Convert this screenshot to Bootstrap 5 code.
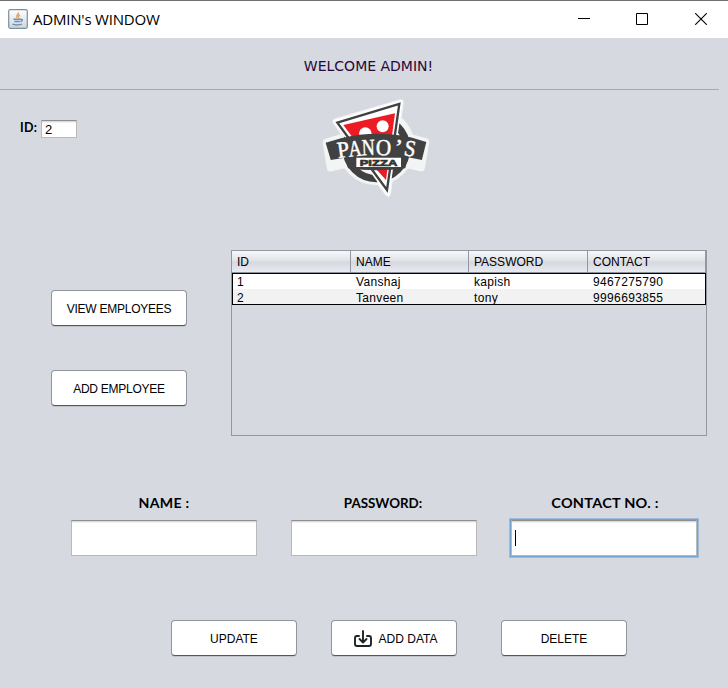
<!DOCTYPE html>
<html lang="en">
<head>
<meta charset="utf-8">
<meta name="viewport" content="width=device-width, initial-scale=1">
<title>ADMIN's WINDOW</title>
<link href="https://cdn.jsdelivr.net/npm/bootstrap@5.3.0/dist/css/bootstrap.min.css" rel="stylesheet">
<style>
body{background:#d6d9e0;font:12px/16px "Liberation Sans",Arial,sans-serif;color:#000;width:728px;height:688px;overflow:hidden}
.titlebar{height:38px;border-top:1px solid #6f6f70;padding:0 0 1px 8px;background:#fff}
.title-text{font:15px/20px "Open Sans","Noto Sans",sans-serif;letter-spacing:-.2px;margin-left:5px}
.controls{gap:46px;padding-right:21px}
.controls svg:last-child{margin-left:1px}
.welcome{height:52px;width:719px;border-bottom:1px solid #a5a8b4;font:14px/18px "DejaVu Sans",Verdana,sans-serif;color:#2a0638;padding:19px 0 0 18px}
.top-row{height:160px;padding-left:20px}
.fancy{font:700 12.5px/16px Lato,sans-serif;white-space:nowrap}
.id-label{margin-top:30px;width:21px;letter-spacing:.3px}
.sp-name{letter-spacing:.25px;transform:scaleX(1.13)}
.sp-pass{transform:translateX(-1px) scaleX(1.07)}
.sp-contact{letter-spacing:.2px;transform:translateX(1px) scaleX(1.16)}
.field{background:#fff;border:1px solid #b9b9b9;border-top-color:#8e8e8e;border-radius:0;box-shadow:inset 0 1px #d9d9d9,inset 0 2px #f2f2f2;padding:0 3px;font-size:13px;color:#000;line-height:16px}
.id-field{width:36px;height:18px;margin-top:30px}
.logo{margin:0 0 0 233px;width:130px;height:115px}
.middle{height:186px;padding-left:51px;gap:44px}
.side{padding-top:40px;gap:44px}
.swing{height:36px;width:126px;padding:2px 0 0;background:#fff;border:1px solid #92959d;border-bottom-color:#53565e;border-radius:4px;font-size:12px;line-height:16px;color:#000;box-shadow:0 1px #c0c3ca;white-space:nowrap}
.swing-wide{width:136px;letter-spacing:-.25px}
.swing-icon{gap:6px;padding-left:2px}
.swing-last{margin-left:10px}
.grid-box{width:476px;height:186px;border:1px solid #9297a1}
.grid-box table{table-layout:fixed;width:474px;line-height:16px;border-collapse:separate;border-spacing:0}
.grid-box th{height:22px;font-weight:400;padding:0 0 0 5px;border-right:1px solid #9297a1;border-bottom:1px solid #8c919b;background:linear-gradient(#f8f8fa,#e4e6eb 40%,#d6d9e0 55%,#e7eaf0)}
.rows{outline:1px solid #000;outline-offset:-1px;letter-spacing:.32px}
.rows td{height:16px;padding:2px 0 0 5px;line-height:14px;vertical-align:bottom}
.rows td:last-child{letter-spacing:.36px}
.rows tr{background:#fff}
.rows tr:last-child{background:#f2f2f2}
.form-row{padding:59px 0 0 71px;gap:34px}
.form-row .field{width:186px;height:36px;margin-top:9px}
.form-row .fancy{height:16px;padding-top:1px}
.form-row .field.active{outline:1px solid #73a4d1;padding:9px 3px;box-shadow:inset 0 1px #d9d9d9,inset 0 2px #f2f2f2,0 0 0 2px #9dbbdc}
.caret{width:1px;height:16px;background:#000}
.actions{padding:64px 0 0 171px;gap:34px}
</style>
<script src="https://cdn.jsdelivr.net/npm/bootstrap@5.3.0/dist/js/bootstrap.bundle.min.js"></script>
</head>
<body>
<header class="titlebar d-flex align-items-center">
  <svg width="20" height="20" viewBox="0 0 20 20">
    <defs><linearGradient id="tile" x2="0" y2="1"><stop stop-color="#fff"/><stop offset="1" stop-color="#cdd5dd"/></linearGradient></defs>
    <rect x=".7" y=".7" width="18.6" height="18.6" rx="1.5" fill="url(#tile)" stroke="#7890a2" stroke-width="1.2"/>
    <path d="M10.300 3.500c1 2-3 2.800-1.300 5.200M11.800 5.800c-2 1-.8 1.800-1.500 3" fill="none" stroke="#ee9a4d" stroke-width="1.500"/>
    <path d="M5.500 10.300h7.500M6.300 12.500h5.500M4.500 15.200c2 1 7.500 1 9.500-.2M13 10.500c2-.5 1.800 1.600-.6 2" fill="none" stroke="#6f90ab" stroke-width="1.400"/>
  </svg>
  <span class="title-text">ADMIN's WINDOW</span>
  <div class="controls d-flex align-items-center ms-auto">
    <svg width="12" height="12" viewBox="0 0 12 12"><path d="M0 5.500h12" stroke="#000"/></svg>
    <svg width="12" height="12" viewBox="0 0 12 12"><path d="M.5.5h11v11H.5z" fill="none" stroke="#000"/></svg>
    <svg width="12" height="12" viewBox="0 0 12 12"><path d="M.2.2l11.600 11.600m0-11.600L.2 11.800" stroke="#000" stroke-width="1.100"/></svg>
  </div>
</header>
<main>
  <div class="welcome text-center">WELCOME ADMIN!</div>
  <section class="top-row d-flex align-items-start">
    <label class="fancy id-label" for="empId">ID:</label>
    <input id="empId" class="field id-field" value="2">
    <svg class="logo" viewBox="0 0 390 345" role="img" aria-label="Pano's Pizza">
      <g fill="#f3f5f5" stroke="#f3f5f5" stroke-linejoin="round">
        <circle cx="199" cy="170" r="115"/>
        <path d="M78 95L271 38 233 308z" stroke-width="20"/>
        <path d="M50 158L95 144Q200 120 302 144L346 156 333 232 290 222Q199 245 106 222L62 232z" stroke-width="24"/>
      </g>
      <circle cx="199" cy="175" r="91" fill="none" stroke="#414142" stroke-width="22"/>
      <path d="M78 95L271 38 233 308z" fill="#fff" stroke="#fff" stroke-width="12"/>
      <path d="M82 98L268 42 231 300z" fill="#fff" stroke="#414142" stroke-width="7"/>
      <path d="M100 105L255 70 228 270 196 235z" fill="#ed1c24"/>
      <circle cx="218" cy="109" r="18" fill="#fff"/><circle cx="166" cy="131" r="19" fill="#fff"/>
      <path d="M50 158L95 145Q200 120 302 143L346 156 333 209 293 201 284 233Q200 245 116 233L106 202 65 209z" transform="translate(-4 -3) scale(1.02)" fill="#414142"/>
      <path d="M139 203h134v28H139z" fill="#fff"/>
      <g font-family="Liberation Serif,serif" font-size="69" fill="#fff" stroke="#fff" stroke-width="1.5">
        <text transform="translate(85 204) rotate(-8)" textLength="36" lengthAdjust="spacingAndGlyphs">P</text>
        <text transform="translate(117 200) rotate(-5)" textLength="40" lengthAdjust="spacingAndGlyphs">A</text>
        <text transform="translate(156 196) rotate(-2)" textLength="39" lengthAdjust="spacingAndGlyphs">N</text>
        <text transform="translate(197 195) rotate(1)" textLength="46" lengthAdjust="spacingAndGlyphs">O</text>
        <text transform="translate(252 194) rotate(5)" textLength="24" lengthAdjust="spacingAndGlyphs">’</text>
        <text transform="translate(280 195) rotate(10)" textLength="34" lengthAdjust="spacingAndGlyphs">S</text>
      </g>
      <text x="149" y="227" font-family="Liberation Sans,Arial,sans-serif" font-weight="700" font-size="29" fill="#333" stroke="#333" stroke-width="2" textLength="113" lengthAdjust="spacingAndGlyphs">PIZZA</text>
    </svg>
  </section>
  <section class="middle d-flex">
    <div class="side d-flex flex-column">
      <button class="btn swing swing-wide">VIEW EMPLOYEES</button>
      <button class="btn swing swing-wide">ADD EMPLOYEE</button>
    </div>
    <div class="grid-box">
      <table>
        <colgroup><col width="119"><col width="118"><col width="119"><col width="118"></colgroup>
        <thead><tr><th>ID</th><th>NAME</th><th>PASSWORD</th><th>CONTACT</th></tr></thead>
        <tbody class="rows">
          <tr><td>1</td><td>Vanshaj</td><td>kapish</td><td>9467275790</td></tr>
          <tr><td>2</td><td>Tanveen</td><td>tony</td><td>9996693855</td></tr>
        </tbody>
      </table>
    </div>
  </section>
  <section class="form-row d-flex">
    <div class="text-center"><div class="fancy sp-name">NAME :</div><div class="field"></div></div>
    <div class="text-center"><div class="fancy sp-pass">PASSWORD:</div><div class="field"></div></div>
    <div class="text-center"><div class="fancy sp-contact">CONTACT NO. :</div><div class="field active"><div class="caret"></div></div></div>
  </section>
  <section class="actions d-flex">
    <button class="btn swing">UPDATE</button>
    <button class="btn swing swing-icon d-flex align-items-center justify-content-center">
      <svg width="20" height="18" viewBox="0 0 20 18" fill="none" stroke="#1e2326" stroke-width="1.900" stroke-linecap="round" stroke-linejoin="round"><path d="M6 6H4Q2 6 2 8v6q0 2 2 2h12q2 0 2-2V8q0-2-2-2h-2M10 1v11M6.500 9l3.500 3.500L13.500 9"/></svg>
      <span>ADD DATA</span>
    </button>
    <button class="btn swing swing-last">DELETE</button>
  </section>
</main>
</body>
</html>
